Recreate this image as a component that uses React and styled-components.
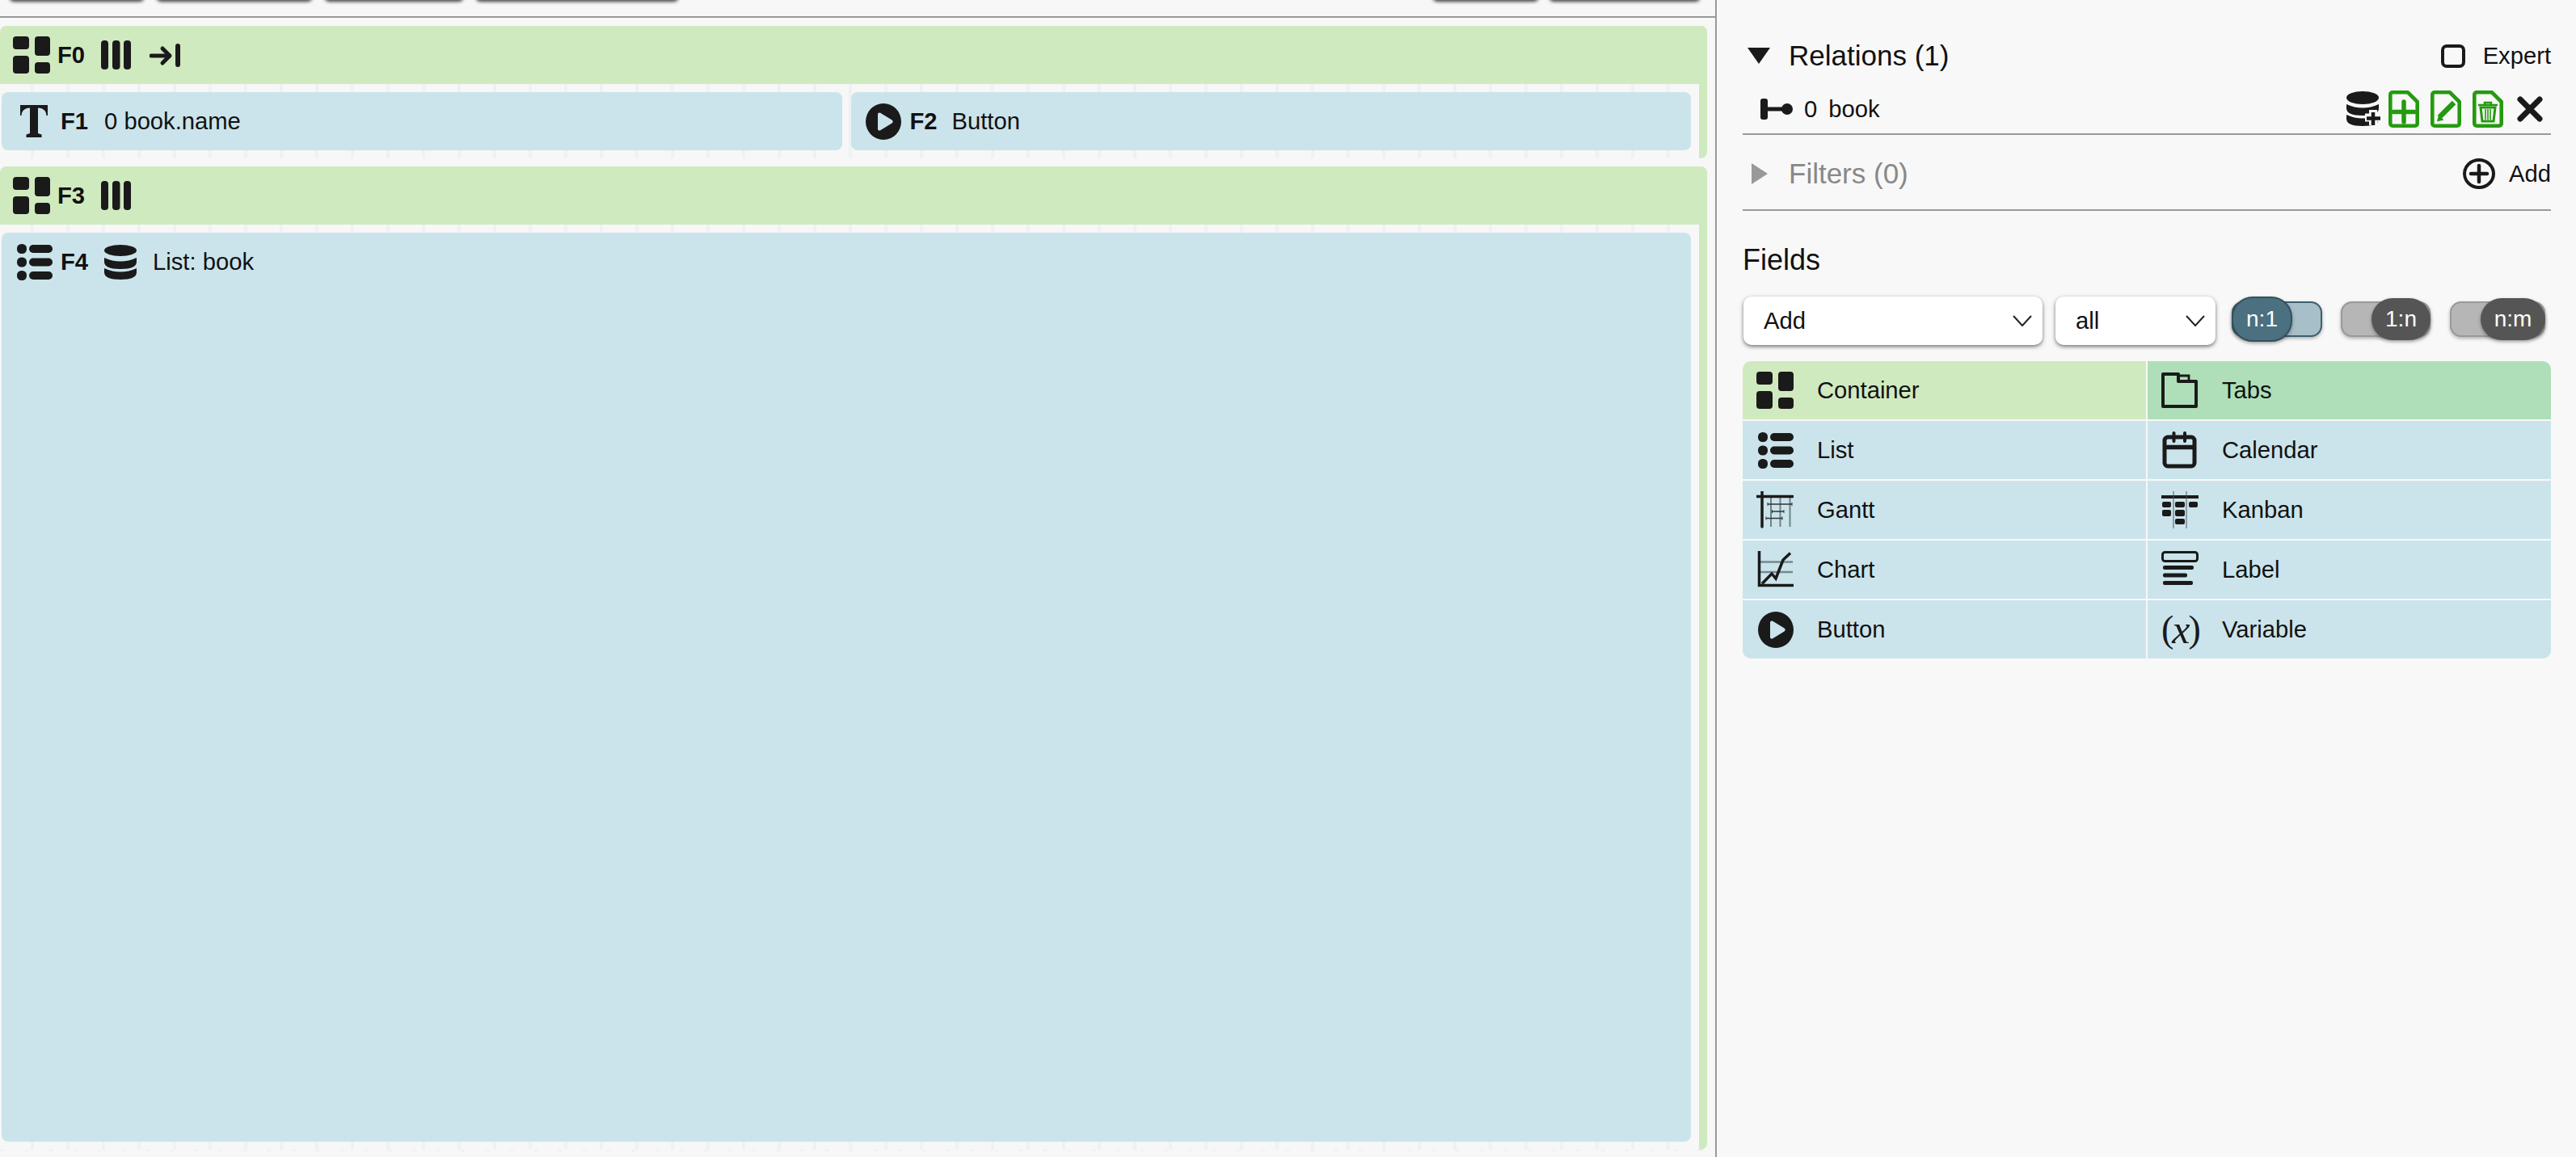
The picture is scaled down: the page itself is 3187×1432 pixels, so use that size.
import React from "react";
import styled, { createGlobalStyle } from "styled-components";

const GlobalStyle = createGlobalStyle`
  html, body {
    margin: 0;
    padding: 0;
    background: #f8f8f8;
  }
  body {
    font-family: "Liberation Sans", Arial, sans-serif;
    font-size: 29.2px;
    color: #111;
  }
`;

const GREEN = "#d0eac0";
const BLUE = "#cbe4eb";
const TICK = "#ecf2f6";
const INK = "#1a1a1a";
const DOC_GREEN = "#259a10";

const Page = styled.div`
  display: flex;
  width: 3187px;
  height: 1432px;
  overflow: hidden;
`;

const Designer = styled.div`
  width: 2122px;
  flex: none;
  display: flex;
  flex-direction: column;
  background: #f7f7f7;
  border-right: 2px solid #999;
`;

const Toolbar = styled.div`
  height: 20px;
  flex: none;
  display: flex;
  justify-content: space-between;
  padding: 0 19px 0 12px;
  border-bottom: 2px solid #999;
  overflow: hidden;
`;

const ToolGroup = styled.div`
  display: flex;
  gap: ${props => props.$gap}px;
`;

const ToolButton = styled.div`
  width: ${props => props.$w}px;
  height: 10px;
  margin-top: -10px;
  border-radius: 6px;
  background: #fff;
  box-shadow: 0 2px 4px rgba(0, 0, 0, 0.75);
`;

const Frames = styled.div`
  flex: 1;
  display: flex;
  flex-direction: column;
  gap: 10px;
  padding: 10px 10px 0 0;
  min-height: 0;
`;

const Frame = styled.div`
  display: flex;
  flex-direction: column;
  flex: ${props => (props.$grow ? 1 : "none")};
  border-radius: 8px 8px 8px 0;
  border-right: 10px solid ${GREEN};
  min-height: 0;
`;

const FrameHead = styled.div`
  height: 72px;
  flex: none;
  display: flex;
  align-items: center;
  padding-left: 16px;
  margin-right: -10px;
  background: ${GREEN};
  border-radius: 8px 8px 0 0;
`;

const IndentSlot = styled.span`
  display: flex;
  margin-left: 23px;
`;

const FrameBody = styled.div`
  flex: 1;
  display: grid;
  grid-template-columns: ${props => props.$cols};
  gap: 11px;
  padding: 10px 10px 10px 2px;
  min-height: 0;
  background: repeating-linear-gradient(
    90deg,
    transparent 0 38px,
    ${TICK} 38px 42px,
    transparent 42px 44px
  );
`;

const Cell = styled.div`
  background: ${BLUE};
  border-radius: 8px;
`;

const CellRow = styled.div`
  height: 72px;
  display: flex;
  align-items: center;
  padding-left: ${props => props.$pad}px;
`;

const FieldId = styled.b`
  font-weight: 700;
  margin: 0 ${props => props.$after || 0}px 0 ${props => props.$before}px;
`;

const FieldText = styled.span`
  margin-left: ${props => props.$before || 0}px;
`;

const BottomMarks = styled.div`
  height: 9px;
  flex: none;
  background:
    repeating-linear-gradient(90deg, #edf1f4 0 6px, transparent 6px 30px) 0 0 / 100% 1px no-repeat,
    repeating-linear-gradient(90deg, transparent 0 1px, #edf1f4 1px 5px, transparent 5px 30px) 0 1px / 100% 1px no-repeat;
`;

const Panel = styled.div`
  flex: 1;
  background: #f8f8f8;
  padding: 46px 31px 0 32px;
`;

const SectionHead = styled.div`
  height: 46px;
  display: flex;
  align-items: center;
  justify-content: space-between;
`;

const Title = styled.div`
  display: flex;
  align-items: center;
  font-size: 35px;
  color: ${props => (props.$muted ? "#888" : "#111")};
`;

const Arrow = styled.svg`
  margin: 0 ${props => props.$right}px 0 ${props => props.$left}px;
`;

const Expert = styled.label`
  display: flex;
  align-items: center;
  gap: 22px;
`;

const CheckBox = styled.span`
  width: 30px;
  height: 29px;
  box-sizing: border-box;
  border: 4px solid ${INK};
  border-radius: 7px;
`;

const RelationRow = styled.div`
  height: 46px;
  display: flex;
  align-items: center;
  justify-content: space-between;
  margin-top: 20px;
  padding: 0 10px 7px 22px;
  border-bottom: 2px solid #999;
`;

const RelationName = styled.div`
  display: flex;
  align-items: center;
  gap: 14px;
`;

const RelationTools = styled.div`
  display: flex;
  align-items: center;
  gap: 10px;
`;

const DocGroup = styled.span`
  display: flex;
  gap: 14px;
  margin-right: 7px;
`;

const FilterRow = styled.div`
  height: 38px;
  display: flex;
  align-items: center;
  justify-content: space-between;
  padding: 29px 0 25px;
  border-bottom: 2px solid #999;
`;

const AddLink = styled.div`
  display: flex;
  align-items: center;
  gap: 17px;
`;

const FieldsTitle = styled.div`
  font-size: 36px;
  line-height: 40px;
  margin-top: 41px;
`;

const Controls = styled.div`
  display: flex;
  align-items: flex-start;
  margin-top: 25px;
  padding-left: 1px;
  height: 60px;
`;

const Select = styled.div`
  width: ${props => props.$w}px;
  height: 60px;
  box-sizing: border-box;
  flex: none;
  display: flex;
  align-items: center;
  justify-content: space-between;
  padding: 0 13px 0 25px;
  margin-right: ${props => props.$after}px;
  background: #fff;
  border-radius: 10px;
  box-shadow: 0 2px 5px rgba(0, 0, 0, 0.55);
`;

const Toggle = styled.div`
  position: relative;
  width: ${props => props.$w}px;
  height: 44px;
  box-sizing: border-box;
  flex: none;
  margin: 6px ${props => props.$after}px 0 0;
  border: 2px solid ${props => (props.$on ? "#3c5f6e" : "#999")};
  border-radius: 14px;
  background: ${props => (props.$on ? "#a7bfc8" : "#b6b6b6")};
  box-shadow: 0 2px 4px rgba(0, 0, 0, 0.3);
`;

const Knob = styled.div`
  position: absolute;
  top: ${props => (props.$on ? "-8px" : "-6px")};
  bottom: ${props => (props.$on ? "-8px" : "-6px")};
  width: ${props => props.$w}px;
  box-sizing: border-box;
  ${props => (props.$on ? "left: -2px;" : "right: -2px;")}
  display: flex;
  align-items: center;
  justify-content: center;
  color: #fff;
  font-size: 28px;
  border-radius: 26px;
  background: ${props => (props.$on ? "#4b7080" : "#555")};
  border: ${props => (props.$on ? "2px solid #33515f" : "none")};
  box-shadow: 0 2px 4px rgba(0, 0, 0, 0.35);
`;

const Palette = styled.div`
  display: grid;
  grid-template-columns: 1fr 1fr;
  gap: 2px;
  margin-top: 20px;
  border-radius: 10px;
  overflow: hidden;
`;

const PaletteItem = styled.div`
  height: 72px;
  display: flex;
  align-items: center;
  gap: 29px;
  padding-left: 17px;
  background: ${props => props.$bg || BLUE};
`;

const IconBox = styled.span`
  width: 46px;
  flex: none;
  display: flex;
  justify-content: flex-end;
`;

const VarSymbol = styled.span`
  width: 46px;
  display: flex;
  align-items: center;
  justify-content: space-between;
  font-family: "Liberation Serif", serif;
  font-size: 46px;
  line-height: 60px;
  color: ${INK};
  i {
    font-size: 50px;
    margin: 0 -2px;
  }
`;

const Svg = ({ w, h, vb, children }) => (
  <svg width={w} height={h} viewBox={vb || `0 0 ${w} ${h}`} fill={INK}>
    {children}
  </svg>
);

const ContainerIcon = () => (
  <Svg w={46} h={46}>
    <rect x="0" y="0" width="20" height="16" rx="4" />
    <rect x="27" y="0" width="19" height="24" rx="4" />
    <rect x="0" y="24" width="20" height="22" rx="4" />
    <rect x="27" y="32" width="19" height="14" rx="4" />
  </Svg>
);

const ColumnsIcon = () => (
  <Svg w={37} h={36}>
    <rect x="0" width="9" height="36" rx="4" />
    <rect x="14" width="9.5" height="36" rx="4" />
    <rect x="28" width="9" height="36" rx="4" />
  </Svg>
);

const IndentIcon = () => (
  <Svg w={38} h={29}>
    <path d="M2 15H24" stroke={INK} strokeWidth="5" strokeLinecap="round" />
    <path d="M16 6L25 15L16 24" stroke={INK} strokeWidth="5" fill="none" strokeLinecap="round" strokeLinejoin="round" />
    <rect x="32" y="0" width="6" height="29" rx="3" />
  </Svg>
);

const TextIcon = () => (
  <Svg w={34} h={40}>
    <path d="M0 0H34V13H32.5C32 7 29 4 22 3.5V35L26.5 36.5V40H7.5V36.5L12 35V3.5C5 4 2 7 1.5 13H0Z" />
  </Svg>
);

const PlayIcon = () => (
  <Svg w={44} h={45}>
    <path
      fillRule="evenodd"
      d="M22 0a22 22.5 0 1 0 0 45a22 22.5 0 1 0 0-45ZM15 13.5c0-2 1.8-2.6 3.2-1.7L32.5 20.5c1.6 1 1.6 3 0 4L18.2 33.2c-1.4.9-3.2.3-3.2-1.7Z"
    />
  </Svg>
);

const ListIcon = () => (
  <Svg w={44} h={45}>
    <rect x="0" y="0" width="12" height="12" rx="5.5" />
    <rect x="15" y="1" width="29" height="10" rx="5" />
    <rect x="0" y="16.5" width="12" height="12" rx="5.5" />
    <rect x="15" y="17.5" width="29" height="10" rx="5" />
    <rect x="0" y="33" width="12" height="12" rx="5.5" />
    <rect x="15" y="34" width="29" height="10" rx="5" />
  </Svg>
);

const diskBand = y => `M0 ${y}Q20 ${y + 9} 40 ${y}V${y + 5}Q40 ${y + 14} 20 ${y + 14}Q0 ${y + 14} 0 ${y + 5}Z`;

const DatabaseIcon = () => (
  <Svg w={40} h={43}>
    <ellipse cx="20" cy="7" rx="20" ry="7" />
    <path d={diskBand(16)} />
    <path d={diskBand(29)} />
  </Svg>
);

const DatabaseAddIcon = () => (
  <Svg w={42} h={44}>
    <ellipse cx="20" cy="8" rx="20" ry="8" />
    <path d={diskBand(16)} />
    <path d={diskBand(29)} />
    <path d="M33 23V42M23 32.5H42" stroke="#f8f8f8" strokeWidth="10" />
    <path d="M33 26V42M25 33.5H42" stroke={INK} strokeWidth="4.5" />
  </Svg>
);

const RelationIcon = () => (
  <Svg w={40} h={26}>
    <rect x="0" y="0" width="9" height="26" rx="3" />
    <rect x="8" y="10.5" width="20" height="5" />
    <circle cx="33" cy="13" r="7" />
  </Svg>
);

const DocIcon = ({ children }) => (
  <Svg w={38} h={46}>
    <path d="M5 2.3H24L35.7 14V41a2.7 2.7 0 0 1-2.7 2.7H5a2.7 2.7 0 0 1-2.7-2.7V5a2.7 2.7 0 0 1 2.7-2.7Z" fill="none" stroke={DOC_GREEN} strokeWidth="4.6" strokeLinejoin="round" />
    {children}
  </Svg>
);

const CloseIcon = () => (
  <Svg w={32} h={32}>
    <path d="M4 4L28 28M28 4L4 28" stroke={INK} strokeWidth="7" strokeLinecap="round" />
  </Svg>
);

const AddCircleIcon = () => (
  <Svg w={40} h={38}>
    <ellipse cx="20" cy="19" rx="18" ry="17" fill="none" stroke={INK} strokeWidth="4" />
    <path d="M20 9V29M10 19H30" stroke={INK} strokeWidth="4.5" strokeLinecap="round" />
  </Svg>
);

const Chevron = () => (
  <Svg w={24} h={14}>
    <path d="M1 1L12 13L23 1" fill="none" stroke="#222" strokeWidth="2" />
  </Svg>
);

const GanttIcon = () => (
  <Svg w={46} h={46}>
    <path d="M18 7V44M29.5 7V44M41.5 7V44" stroke="#6f8289" strokeWidth="2" />
    <path d="M7 0V44M0 6.5H45" stroke={INK} strokeWidth="3.5" strokeLinecap="round" />
    <path d="M14 16H44M19.5 25H34M12 33.5H32" stroke="#333" strokeWidth="1.5" />
    <path d="M14 14V18M44 14V18M19.5 23V27M34 23V27M12 31.5V35.5M32 31.5V35.5" stroke="#333" strokeWidth="1" />
  </Svg>
);

const ChartIcon = () => (
  <Svg w={46} h={46}>
    <path d="M5 13.5H45M5 26H45" stroke="#75898f" strokeWidth="2.5" />
    <path d="M3.5 1V42.5H45" fill="none" stroke={INK} strokeWidth="3.5" strokeLinecap="square" />
    <path d="M7 40.5L19 28L24 34L33 11L42 2.5" fill="none" stroke={INK} strokeWidth="3.5" />
  </Svg>
);

const TabsIcon = () => (
  <Svg w={46} h={46}>
    <path d="M2 3H21V12H43V43H2Z" fill="none" stroke={INK} strokeWidth="4" strokeLinejoin="round" />
    <path d="M21 5H34V12" fill="none" stroke={INK} strokeWidth="2.8" />
  </Svg>
);

const CalendarIcon = () => (
  <Svg w={46} h={46}>
    <rect x="4" y="7" width="37" height="36" rx="4" fill="none" stroke={INK} strokeWidth="5" />
    <path d="M4 19.5H41" stroke={INK} strokeWidth="5.5" />
    <path d="M15.5 2V12M29 2V12" stroke={INK} strokeWidth="4" strokeLinecap="round" />
  </Svg>
);

const KanbanIcon = () => (
  <Svg w={46} h={46}>
    <path d="M0 7H46" stroke={INK} strokeWidth="4" />
    <path d="M15 0V46M31 0V46" stroke="#556" strokeWidth="1" />
    <rect x="1" y="13" width="11" height="7" rx="2" />
    <rect x="17" y="13" width="12" height="7" rx="2" />
    <rect x="34" y="13" width="11" height="7" rx="2" />
    <rect x="1" y="23" width="11" height="8" rx="2" />
    <rect x="17" y="23" width="12" height="8" rx="2" />
    <rect x="17" y="34" width="12" height="7" rx="2" />
  </Svg>
);

const LabelIcon = () => (
  <Svg w={46} h={46}>
    <rect x="1.5" y="1.5" width="43" height="11" rx="3" fill="none" stroke={INK} strokeWidth="3" />
    <rect x="2" y="18" width="38" height="5" rx="2" />
    <rect x="2" y="27.5" width="30" height="5" rx="2" />
    <rect x="2" y="37" width="37" height="5" rx="2" />
  </Svg>
);

const VariableIcon = () => (
  <VarSymbol>
    <span>(</span>
    <i>x</i>
    <span>)</span>
  </VarSymbol>
);

const toolsLeft = [166, 192, 171, 250];
const toolsRight = [130, 186];

const paletteItems = [
  { name: "Container", Icon: ContainerIcon, bg: GREEN },
  { name: "Tabs", Icon: TabsIcon, bg: "#aedfb8" },
  { name: "List", Icon: ListIcon },
  { name: "Calendar", Icon: CalendarIcon },
  { name: "Gantt", Icon: GanttIcon },
  { name: "Kanban", Icon: KanbanIcon },
  { name: "Chart", Icon: ChartIcon },
  { name: "Label", Icon: LabelIcon },
  { name: "Button", Icon: PlayIcon },
  { name: "Variable", Icon: VariableIcon }
];

const App = () => (
  <Page>
    <GlobalStyle />
    <Designer>
      <Toolbar>
        <ToolGroup $gap={16}>
          {toolsLeft.map((w, index) => (
            <ToolButton $w={w} key={index} />
          ))}
        </ToolGroup>
        <ToolGroup $gap={14}>
          {toolsRight.map((w, index) => (
            <ToolButton $w={w} key={index} />
          ))}
        </ToolGroup>
      </Toolbar>
      <Frames>
        <Frame>
          <FrameHead>
            <ContainerIcon />
            <FieldId $before={9} $after={20}>F0</FieldId>
            <ColumnsIcon />
            <IndentSlot>
              <IndentIcon />
            </IndentSlot>
          </FrameHead>
          <FrameBody $cols="1fr 1fr">
            <Cell>
              <CellRow $pad={23}>
                <TextIcon />
                <FieldId $before={16}>F1</FieldId>
                <FieldText $before={20}>0 book.name</FieldText>
              </CellRow>
            </Cell>
            <Cell>
              <CellRow $pad={18}>
                <PlayIcon />
                <FieldId $before={11}>F2</FieldId>
                <FieldText $before={18}>Button</FieldText>
              </CellRow>
            </Cell>
          </FrameBody>
        </Frame>
        <Frame $grow>
          <FrameHead>
            <ContainerIcon />
            <FieldId $before={9} $after={20}>F3</FieldId>
            <ColumnsIcon />
          </FrameHead>
          <FrameBody $cols="1fr">
            <Cell>
              <CellRow $pad={19}>
                <ListIcon />
                <FieldId $before={10} $after={20}>F4</FieldId>
                <DatabaseIcon />
                <FieldText $before={20}>List: book</FieldText>
              </CellRow>
            </Cell>
          </FrameBody>
        </Frame>
      </Frames>
      <BottomMarks />
    </Designer>
    <Panel>
      <SectionHead>
        <Title>
          <Arrow $left={6} $right={23} width="28" height="20" viewBox="0 0 28 20" fill={INK}>
            <path d="M0 0H28L14 20Z" />
          </Arrow>
          Relations (1)
        </Title>
        <Expert>
          <CheckBox />
          Expert
        </Expert>
      </SectionHead>
      <RelationRow>
        <RelationName>
          <RelationIcon />
          <span>0</span>
          <span>book</span>
        </RelationName>
        <RelationTools>
          <DatabaseAddIcon />
          <DocGroup>
            <DocIcon>
              <path d="M19 14V39M6 26.5H32" stroke={DOC_GREEN} strokeWidth="5.5" strokeLinecap="round" />
            </DocIcon>
            <DocIcon>
              <path d="M11 33L29 15" stroke={DOC_GREEN} strokeWidth="6.5" />
              <path d="M8 38.5L10 30L16.5 36.5Z" fill={DOC_GREEN} />
            </DocIcon>
            <DocIcon>
              <path d="M7 18H31M15 18V15H23V18" fill="none" stroke={DOC_GREEN} strokeWidth="2.5" />
              <path d="M10 21H28L26 38H12Z" fill="none" stroke={DOC_GREEN} strokeWidth="3" />
              <path d="M16 23V36M19 23V36M22 23V36" stroke={DOC_GREEN} strokeWidth="1.6" />
            </DocIcon>
          </DocGroup>
          <CloseIcon />
        </RelationTools>
      </RelationRow>
      <FilterRow>
        <Title $muted>
          <Arrow $left={11} $right={26} width="20" height="26" viewBox="0 0 20 26" fill="#999">
            <path d="M0 0L20 13L0 26Z" />
          </Arrow>
          Filters (0)
        </Title>
        <AddLink>
          <AddCircleIcon />
          Add
        </AddLink>
      </FilterRow>
      <FieldsTitle>Fields</FieldsTitle>
      <Controls>
        <Select $w={370} $after={16}>
          Add
          <Chevron />
        </Select>
        <Select $w={198} $after={20}>
          all
          <Chevron />
        </Select>
        <Toggle $w={112} $on $after={23}>
          <Knob $on $w={75}>n:1</Knob>
        </Toggle>
        <Toggle $w={111} $after={24}>
          <Knob $w={73}>1:n</Knob>
        </Toggle>
        <Toggle $w={118} $after={0}>
          <Knob $w={80}>n:m</Knob>
        </Toggle>
      </Controls>
      <Palette>
        {paletteItems.map(({ name, Icon, bg }) => (
          <PaletteItem $bg={bg} key={name}>
            <IconBox>
              <Icon />
            </IconBox>
            {name}
          </PaletteItem>
        ))}
      </Palette>
    </Panel>
  </Page>
);

export default App;
